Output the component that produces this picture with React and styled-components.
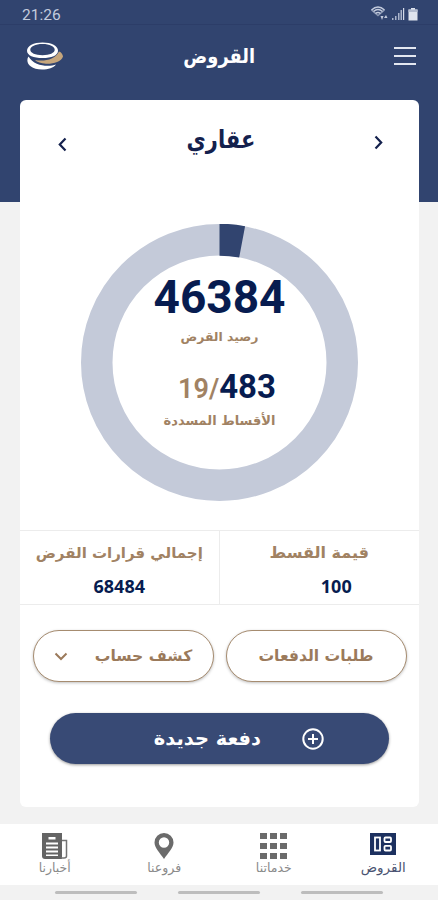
import React from "react";
import styled, { createGlobalStyle } from "styled-components";

const stats = [
  { label: "قيمة القسط", value: "100", shift: 17, size: 16 },
  { label: "إجمالي قرارات القرض", value: "68484", shift: 0, size: 15 },
];

const tabs = [
  { label: "القروض", icon: <LoansIcon />, active: true },
  { label: "خدماتنا", icon: <GridIcon /> },
  { label: "فروعنا", icon: <PinIcon /> },
  { label: "أخبارنا", icon: <NewsIcon /> },
];

export default function App() {
  return (
    <>
      <GlobalStyle />
      <Screen>
        <StatusBar>
          <Clock>21:26</Clock>
          <StatusIcons />
        </StatusBar>
        <Header>
          <Logo />
          <PageTitle>القروض</PageTitle>
          <MenuButton aria-label="القائمة">
            <MenuLine />
            <MenuLine />
            <MenuLine />
          </MenuButton>
        </Header>
        <Card>
          <CardTop>
            <ArrowButton $top={17}>
              <Chevron d="M7.5 1.5 1.8 7.5l5.7 6" />
            </ArrowButton>
            <LoanType>عقاري</LoanType>
            <ArrowButton $top={15}>
              <Chevron d="M1.5 1.5l5.7 6-5.7 6" />
            </ArrowButton>
          </CardTop>
          <Chart>
            <Ring />
            <ChartText>
              <Balance>46384</Balance>
              <Caption $size={12.4}>رصيد القرض</Caption>
              <Installments>
                <Paid>19/</Paid>
                <Total>483</Total>
              </Installments>
              <Caption $size={13}>الأقساط المسددة</Caption>
            </ChartText>
          </Chart>
          <Stats>
            {stats.map((stat) => (
              <Stat key={stat.label}>
                <StatLabel $size={stat.size}>{stat.label}</StatLabel>
                <StatValue $shift={stat.shift}>{stat.value}</StatValue>
              </Stat>
            ))}
          </Stats>
          <Actions>
            <OutlineButton>طلبات الدفعات</OutlineButton>
            <OutlineButton $gap={27}>
              كشف حساب
              <svg width="14" height="9" viewBox="0 0 14 9" fill="none">
                <path d="M1.5 1.5 7 7l5.5-5.5" stroke="#9b7a5b" strokeWidth="2" />
              </svg>
            </OutlineButton>
          </Actions>
          <PrimaryButton>
            <PlusIcon />
            <span>دفعة جديدة</span>
          </PrimaryButton>
        </Card>
        <TabBar>
          {tabs.map((tab) => (
            <Tab key={tab.label}>
              {tab.icon}
              <TabLabel $active={tab.active}>{tab.label}</TabLabel>
            </Tab>
          ))}
        </TabBar>
        <SystemBar>
          <SystemLine />
          <SystemLine />
          <SystemLine />
        </SystemBar>
      </Screen>
    </>
  );
}

function StatusIcons() {
  return (
    <svg width="50" height="18" viewBox="0 0 50 18" fill="none">
      <g stroke="#c3cbdd" strokeWidth="1.5">
        <path d="M1.5 5q6.5-6 13 0" />
        <path d="M1.5 5 8 10.500 14.500 5" opacity=".6" />
        <path d="M3.5 6.500q4.500-4 9 0" />
        <path d="M5.500 8.500q2.500-2 5 0" />
      </g>
      <path d="M10.500 11h3L12 15zM14 13l2-3 1.500 3z" fill="#c3cbdd" />
      <g fill="#aab4cb">
        <rect x="22" y="13" width="1.5" height="2" />
        <rect x="25" y="11" width="1.5" height="4" />
        <rect x="28" y="8" width="1.5" height="7" />
        <rect x="30.5" y="5" width="1.5" height="10" />
      </g>
      <rect x="33" y="3" width="1.2" height="12" fill="#d4dae8" />
      <path d="M41 3h4v1.5h2.5V15.500h-9V4.500H41z" fill="#dfe4ee" />
      <rect x="38.5" y="4.5" width="9" height="2.5" fill="#b3bccf" />
    </svg>
  );
}

function Logo() {
  return (
    <svg width="38" height="28" viewBox="0 0 38 28" fill="none">
      <path
        d="M2.5 14.5C-1 20 3.5 27.5 16 27.5c6.5 0 11.500-1.500 14-5-7 2.500-22 2-27.500-8z"
        fill="#fff"
      />
      <path
        d="M9 18c9 1.500 20 0 24-8.500 1.500 0 4 3 4 5-1.500 5.500-10 7.500-17 7.200C15 21.500 11 20 9 18z"
        fill="#c6a67c"
      />
      <path
        d="M16.500.5C7.500.5 1 4 1 8.700s6.500 7.300 15.500 7.300S32 13.400 32 8.700 25.500.5 16.500.5zm0 1.600c7.200 0 12.200 2.500 12.200 5.700s-5 5.400-12.200 5.400S4.300 11 4.300 7.800s5-5.700 12.200-5.700z"
        fill="#fff"
        fillRule="evenodd"
      />
    </svg>
  );
}

function Chevron({ d }) {
  return (
    <svg width="9" height="15" viewBox="0 0 9 15" fill="none">
      <path d={d} stroke="#14214d" strokeWidth="2.2" />
    </svg>
  );
}

function Ring() {
  const radius = 122.75;
  const length = 2 * Math.PI * radius;
  const part = length * 0.0295;
  return (
    <svg width="277" height="277" viewBox="0 0 277 277" fill="none">
      <circle cx="138.5" cy="138.5" r={radius} stroke="#c4cad9" strokeWidth="31.5" />
      <circle
        cx="138.5"
        cy="138.5"
        r={radius}
        stroke="#31446f"
        strokeWidth="32"
        strokeDasharray={`${part} ${length - part}`}
        transform="rotate(-90 138.5 138.5)"
      />
    </svg>
  );
}

function PlusIcon() {
  return (
    <svg width="22" height="22" viewBox="0 0 22 22" fill="none">
      <g stroke="#fff" strokeWidth="2">
        <circle cx="11" cy="11" r="9.7" />
        <path d="M11 6v10M6 11h10" />
      </g>
    </svg>
  );
}

function LoansIcon() {
  return (
    <svg width="26" height="22" viewBox="0 0 26 22">
      <rect width="26" height="22" fill="#1c305f" />
      <g fill="none" stroke="#fff" strokeWidth="1.8">
        <rect x="5" y="4.5" width="5" height="13" />
        <rect x="14.5" y="4.5" width="6.5" height="4.5" rx="1" />
        <rect x="14.5" y="12.8" width="6.5" height="4.7" rx="1" />
      </g>
    </svg>
  );
}

function GridIcon() {
  return (
    <svg width="27" height="26" viewBox="0 0 27 26" fill="#6b6b6b">
      {[0, 10, 20].map((y) =>
        [0, 10, 20].map((x) => (
          <rect key={`${x}-${y}`} x={x} y={y} width="7" height="6" />
        ))
      )}
    </svg>
  );
}

function PinIcon() {
  return (
    <svg width="20" height="26" viewBox="0 0 20 26">
      <path
        d="M10 0a9.500 9.500 0 0 0-9.500 9.500C.5 15 6 20 10 26c4-6 9.500-11 9.500-16.500A9.500 9.500 0 0 0 10 0zm0 4.300a5.200 5.200 0 1 1 0 10.400 5.200 5.200 0 0 1 0-10.400z"
        fill="#6b6b6b"
      />
    </svg>
  );
}

function NewsIcon() {
  return (
    <svg width="26" height="26" viewBox="0 0 26 26">
      <path d="M0 0h20v26H3q-3 0-3-3z" fill="#646464" />
      <path d="M20 7.5h4.500V23q0 2-2.500 2h-3" fill="none" stroke="#747474" strokeWidth="1.5" />
      <path
        d="M6.500 4h7v2.500h-7zM4 9.500h12v2H4zM4 13.500h12v2H4zM4 17.500h12v2H4zM4 21.500h12v1.500H4z"
        fill="#fff"
      />
    </svg>
  );
}

const GlobalStyle = createGlobalStyle`
  * {
    box-sizing: border-box;
  }

  body {
    margin: 0;
    font-family: "DejaVu Sans", sans-serif;
  }

  button {
    font-family: inherit;
    border: none;
    padding: 0;
    background: none;
  }

  svg {
    display: block;
    flex-shrink: 0;
  }
`;

const Screen = styled.div`
  width: 438px;
  height: 900px;
  overflow: hidden;
  display: flex;
  flex-direction: column;
  background: linear-gradient(#31446f 202px, #f2f2f2 202px);
`;

const StatusBar = styled.div`
  height: 25px;
  padding: 5px 18px 0 22px;
  display: flex;
  justify-content: space-between;
  border-bottom: 1px solid #2c3d68;
`;

const Clock = styled.span`
  font-family: Roboto, sans-serif;
  font-size: 15.5px;
  line-height: 20px;
  color: #c3cbdd;
`;

const Header = styled.header`
  height: 75px;
  padding: 0 22px 14px 26px;
  display: grid;
  grid-template-columns: 124px 1fr 124px;
  align-items: center;
`;

const PageTitle = styled.h1`
  margin: 0;
  padding-right: 4px;
  font-size: 20px;
  line-height: 28px;
  font-weight: 700;
  text-align: center;
  transform: scaleX(0.89);
  color: #fff;
`;

const MenuButton = styled.button`
  width: 22px;
  justify-self: end;
  display: flex;
  flex-direction: column;
  gap: 6px;
`;

const MenuLine = styled.span`
  height: 2px;
  background: #e3e7f0;
`;

const Card = styled.main`
  width: 399px;
  height: 707px;
  margin-left: 20px;
  flex-shrink: 0;
  background: #fff;
  border-radius: 6px;
  display: flex;
  flex-direction: column;
  align-items: center;
`;

const CardTop = styled.div`
  align-self: stretch;
  height: 124px;
  padding: 20px 36px 0 38px;
  display: flex;
  align-items: flex-start;
  justify-content: space-between;
`;

const ArrowButton = styled.button`
  margin-top: ${(props) => props.$top}px;
`;

const LoanType = styled.h2`
  margin: 0;
  font-size: 25px;
  line-height: 40px;
  transform: scaleX(0.84);
  color: #14214d;
`;

const Chart = styled.div`
  display: grid;
  width: 277px;
  height: 277px;

  > * {
    grid-area: 1 / 1;
  }
`;

const ChartText = styled.div`
  padding-top: 47px;
  display: flex;
  flex-direction: column;
  align-items: center;
`;

const Balance = styled.div`
  font-family: Roboto, sans-serif;
  font-size: 46px;
  line-height: 52px;
  font-weight: 700;
  color: #071c50;
`;

const Caption = styled.div`
  font-size: ${(props) => props.$size}px;
  line-height: 28px;
  font-weight: 700;
  color: #a18263;
`;

const Installments = styled.div`
  margin: 15px 0 -1px;
  height: 42px;
  padding-left: 15px;
  display: flex;
  align-items: baseline;
  font-family: Roboto, sans-serif;
  line-height: 42px;
`;

const Paid = styled.span`
  font-size: 27px;
  font-weight: 600;
  color: #a18263;
`;

const Total = styled.span`
  font-size: 33px;
  font-weight: 700;
  color: #071c50;
`;

const Stats = styled.div`
  align-self: stretch;
  direction: rtl;
  margin-top: 29px;
  height: 75px;
  display: grid;
  grid-template-columns: 1fr 1fr;
  border-top: 1px solid #ececec;
  border-bottom: 1px solid #ececec;
`;

const Stat = styled.div`
  padding-top: 6px;
  display: flex;
  flex-direction: column;
  align-items: center;
  white-space: nowrap;

  & + & {
    border-right: 1px solid #ececec;
  }
`;

const StatLabel = styled.div`
  font-size: ${(props) => props.$size}px;
  line-height: 32px;
  font-weight: 700;
  color: #a18263;
`;

const StatValue = styled.div`
  padding-left: ${(props) => props.$shift * 2}px;
  font-family: "Noto Sans", sans-serif;
  font-size: 18px;
  line-height: 34px;
  font-weight: 700;
  color: #071c50;
`;

const Actions = styled.div`
  direction: rtl;
  margin-top: 25px;
  display: flex;
  gap: 12px;
`;

const OutlineButton = styled.button`
  width: 181px;
  height: 52px;
  display: flex;
  align-items: center;
  justify-content: center;
  gap: ${(props) => props.$gap || 0}px;
  border: 1.5px solid #a68c70;
  border-radius: 26px;
  background: #fff;
  box-shadow: 0 1px 3px rgba(0, 0, 0, 0.25);
  font-size: 15.6px;
  font-weight: 700;
  color: #9b7a5b;
`;

const PrimaryButton = styled.button`
  direction: rtl;
  width: 339px;
  height: 51px;
  margin-top: 31px;
  padding-right: 65px;
  display: flex;
  align-items: center;
  gap: 41px;
  border-radius: 26px;
  background: #384a75;
  box-shadow: 0 1px 3px rgba(0, 0, 0, 0.4);
  font-size: 19.4px;
  font-weight: 700;
  color: #fff;
`;

const TabBar = styled.nav`
  direction: rtl;
  height: 61px;
  margin-top: 17px;
  display: grid;
  grid-template-columns: repeat(4, 1fr);
  flex-shrink: 0;
  background: #fff;
`;

const Tab = styled.div`
  padding-top: 9px;
  display: flex;
  flex-direction: column;
  align-items: center;
`;

const TabLabel = styled.span`
  margin-top: ${(props) => (props.$active ? 3 : 0)}px;
  font-size: ${(props) => (props.$active ? 13.5 : 12.5)}px;
  line-height: 18px;
  color: ${(props) => (props.$active ? "#4b5472" : "#8a8a8a")};
`;

const SystemBar = styled.div`
  height: 15px;
  padding-top: 6px;
  display: flex;
  justify-content: center;
  gap: 41px;
`;

const SystemLine = styled.span`
  width: 82px;
  height: 3px;
  border-radius: 2px;
  background: #bdbdbd;
`;
